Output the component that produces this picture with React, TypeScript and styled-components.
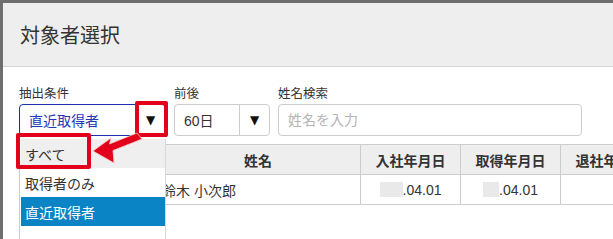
import React from "react";
import styled, { createGlobalStyle } from "styled-components";

const GlobalStyle = createGlobalStyle`
  html, body {
    margin: 0;
    padding: 0;
    background: #6e6e6e;
    font-family: "Liberation Sans", "Noto Sans CJK JP", sans-serif;
    color: #333;
  }
`;

const Page = styled.div`
  width: 613px;
  height: 239px;
  padding: 3px 0 0 3px;
  box-sizing: border-box;
  overflow: hidden;
`;

const Modal = styled.section`
  width: 640px;
  height: 236px;
  background: #fff;
  overflow: hidden;
`;

const Header = styled.header`
  height: 63px;
  background: #eeeeee;
  border-bottom: 1px solid #d4d4d4;
  display: flex;
  align-items: center;
  padding-left: 17px;
  font-size: 20px;
  color: #333;
`;

const Body = styled.div`
  padding: 20px 0 0 16px;
`;

const FilterRow = styled.div`
  display: flex;
  gap: 8px;
`;

const Field = styled.div<{ $width: number }>`
  position: relative;
  width: ${(p) => p.$width}px;
  display: flex;
  flex-direction: column;
`;

const Label = styled.label`
  font-size: 12.5px;
  line-height: 15px;
  margin-bottom: 2px;
  color: #333;
`;

const SelectBox = styled.div<{ $active?: boolean }>`
  height: 32px;
  box-sizing: border-box;
  border: 1px solid ${(p) => (p.$active ? "#1c2fb0" : "#cccccc")};
  border-radius: 4px;
  display: flex;
  align-items: center;
  background: #fff;
`;

const SelectValue = styled.span<{ $active?: boolean }>`
  flex: 1;
  padding-left: 9px;
  font-size: 14px;
  color: ${(p) => (p.$active ? "#2237b8" : "#333")};
`;

const SelectArrow = styled.span`
  width: 29px;
  align-self: stretch;
  border-left: 1px solid #cccccc;
  display: flex;
  align-items: center;
  justify-content: center;
  font-size: 12px;
  color: #111;
  font-family: "DejaVu Sans", sans-serif;
`;

const SearchInput = styled.input`
  height: 32px;
  box-sizing: border-box;
  border: 1px solid #cccccc;
  border-radius: 4px;
  padding: 0 9px;
  font-family: "Liberation Sans", "Noto Sans CJK JP", sans-serif;
  font-size: 14px;
  color: #333;
  outline: none;
  &::placeholder {
    color: #b4b4b4;
  }
`;

const Table = styled.table`
  margin-top: 8px;
  border-collapse: collapse;
  table-layout: fixed;
  width: 641px;
  font-size: 14px;

  th, td {
    height: 29px;
    border: 1px solid #cccccc;
    padding: 0 6px;
    white-space: nowrap;
    overflow: hidden;
  }
  th {
    background: #eeeeee;
    font-weight: bold;
    text-align: center;
    color: #333;
  }
  td {
    color: #333;
    text-align: center;
  }
  td.name {
    text-align: left;
  }
`;

const Masked = styled.span<{ $w: number }>`
  display: inline-block;
  width: ${(p) => p.$w}px;
  height: 15px;
  background: #e9e9e9;
  vertical-align: -2px;
`;

const Dropdown = styled.ul`
  position: absolute;
  top: 52px;
  left: 0;
  width: 147px;
  height: 120px;
  box-sizing: border-box;
  margin: 0;
  padding: 0 0 0 1px;
  list-style: none;
  background: #fff;
  border-left: 1px solid #cccccc;
  border-right: 1px solid #d8d8d8;
  z-index: 2;
`;

const Option = styled.li<{ $state?: "hover" | "selected" }>`
  height: 29px;
  display: flex;
  align-items: center;
  padding-left: 4px;
  font-size: 14px;
  background: ${(p) =>
    p.$state === "hover" ? "#efefef" : p.$state === "selected" ? "#0a84c4" : "#fff"};
  color: ${(p) => (p.$state === "selected" ? "#fff" : "#333")};
`;

const Highlight = styled.div<{ $x: number; $y: number; $w: number; $h: number }>`
  position: absolute;
  left: ${(p) => p.$x}px;
  top: ${(p) => p.$y}px;
  width: ${(p) => p.$w}px;
  height: ${(p) => p.$h}px;
  box-sizing: border-box;
  border: 4px solid #e2001a;
  border-radius: 2px;
  z-index: 3;
  pointer-events: none;
`;

const ArrowMark = styled.svg`
  position: absolute;
  left: 71px;
  top: 45px;
  z-index: 4;
`;

export default function App() {
  return (
    <>
      <GlobalStyle />
      <Page>
        <Modal>
          <Header>対象者選択</Header>
          <Body>
            <FilterRow>
              <Field $width={147}>
                <Label>抽出条件</Label>
                <SelectBox $active>
                  <SelectValue $active>直近取得者</SelectValue>
                  <SelectArrow style={{ borderLeft: "none" }}>▼</SelectArrow>
                </SelectBox>
                <Dropdown>
                  <Option $state="hover">すべて</Option>
                  <Option>取得者のみ</Option>
                  <Option $state="selected">直近取得者</Option>
                </Dropdown>
                <Highlight $x={116} $y={14} $w={33} $h={36} />
                <Highlight $x={-3} $y={46} $w={75} $h={36} />
                <ArrowMark width="56" height="34" viewBox="0 0 56 34">
                  <path
                    d="M3 19 L21 6 L19.5 12 L47 1 L52 7 L23 18.5 L24 31 Z"
                    fill="#e2001a"
                    stroke="#f6c6c6"
                    strokeWidth="0.8"
                    strokeLinejoin="round"
                  />
                </ArrowMark>
              </Field>
              <Field $width={96}>
                <Label>前後</Label>
                <SelectBox>
                  <SelectValue>60日</SelectValue>
                  <SelectArrow>▼</SelectArrow>
                </SelectBox>
              </Field>
              <Field $width={304}>
                <Label>姓名検索</Label>
                <SearchInput placeholder="姓名を入力" />
              </Field>
            </FilterRow>
            <Table>
              <colgroup>
                <col style={{ width: 136 }} />
                <col style={{ width: 205 }} />
                <col style={{ width: 100 }} />
                <col style={{ width: 100 }} />
                <col style={{ width: 100 }} />
              </colgroup>
              <thead>
                <tr>
                  <th>選択</th>
                  <th>姓名</th>
                  <th>入社年月日</th>
                  <th>取得年月日</th>
                  <th>退社年月日</th>
                </tr>
              </thead>
              <tbody>
                <tr>
                  <td></td>
                  <td className="name">鈴木 小次郎</td>
                  <td>
                    <Masked $w={23} />.04.01
                  </td>
                  <td>
                    <Masked $w={16} />.04.01
                  </td>
                  <td></td>
                </tr>
              </tbody>
            </Table>
          </Body>
        </Modal>
      </Page>
    </>
  );
}
